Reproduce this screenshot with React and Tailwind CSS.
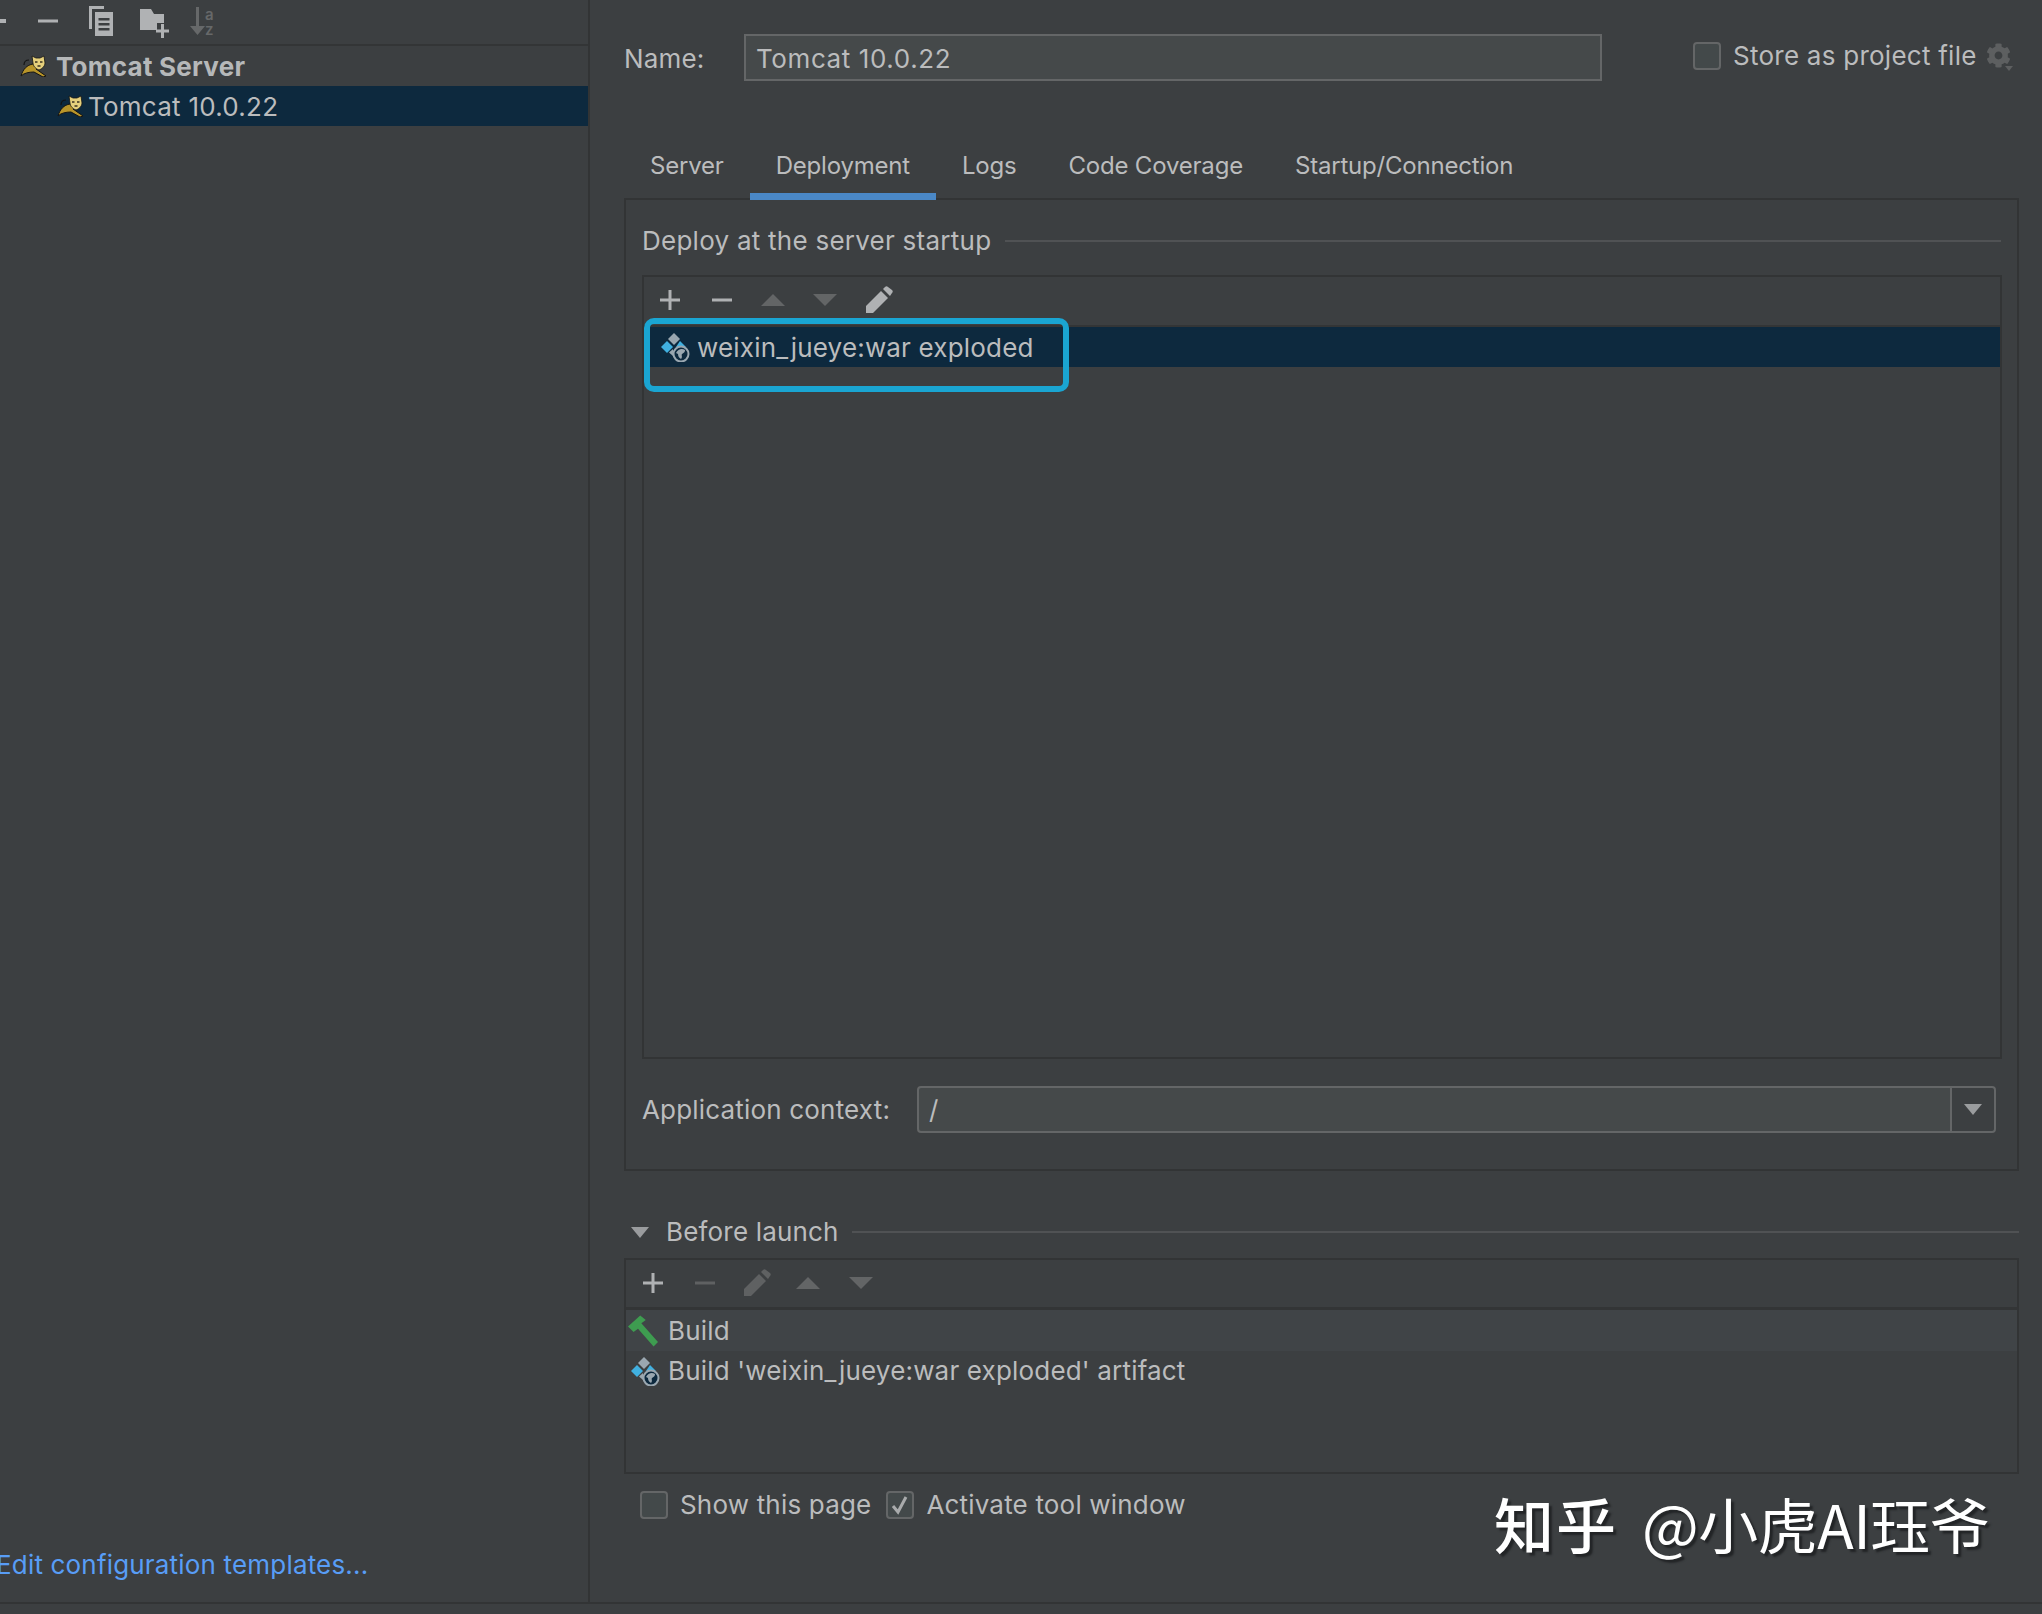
import { FaCog } from 'react-icons/fa'

const Plus = ({ color = '#afb1b3' }) => (
  <svg width="22" height="22" viewBox="0 0 22 22"><path d="M9.5 1h3v8.5H21v3h-8.5V21h-3v-8.5H1v-3h8.5z" fill={color} /></svg>
)
const Minus = ({ color = '#afb1b3' }) => (
  <svg width="22" height="22" viewBox="0 0 22 22"><rect x="1" y="9.5" width="20" height="3" fill={color} /></svg>
)
const Up = () => (
  <svg width="24" height="12" viewBox="0 0 24 12"><path d="M12 0l12 12H0z" fill="#636566" /></svg>
)
const Down = () => (
  <svg width="24" height="12" viewBox="0 0 24 12"><path d="M0 0h24L12 12z" fill="#636566" /></svg>
)
const Pencil = ({ color = '#afb1b3' }) => (
  <svg width="28" height="28" viewBox="0 0 28 28">
    <path d="M1 27v-7L16 5l7 7L8 27z" fill={color} />
    <path d="M18 3l2-2c1-1 2-1 3 0l4 3c1 1 1 2 0 3l-2 3z" fill={color} />
  </svg>
)

function Tomcat() {
  return (
    <svg width="28" height="22" viewBox="0 0 28 22" className="shrink-0">
      <path d="M1 21c2-7 6-11 12-12l8 3-5 2 10 7-3 1-9-5c-5 0-10 1-13 4z" fill="#b8952a" stroke="#141414" strokeWidth="1" />
      <path d="M4 10c0-3 2-5 5-5" fill="none" stroke="#141414" strokeWidth="1.2" />
      <path d="M12 1l4 2h4l4-2 1 7c0 3-3 6-6 7-3-1-6-4-6-7z" fill="#e6d07c" stroke="#141414" strokeWidth="0.8" />
      <path d="M15 7h2.500M20 7h2.500M17.500 11h3" stroke="#3a3020" strokeWidth="1.3" />
    </svg>
  )
}

function Artifact() {
  return (
    <svg width="30" height="30" viewBox="0 0 30 30" className="shrink-0">
      <path d="M7 9l6 6-6 6-6-6z" fill="#40b0e0" />
      <path d="M14 1l6 6-6 6-6-6z" fill="#9aa7b0" />
      <path d="M20 9l6 6h-10z" fill="#40b0e0" />
      <path d="M13 17v7l-4-3.5z" fill="#9aa7b0" />
      <circle cx="21" cy="22" r="7.5" fill="#0d293e" stroke="#9aa7b0" strokeWidth="2" />
      <path d="M16 21c2-4 6-5 9-3 0 3-2 3-3 4s1 3-1 5c-2-1-3-3-3-5z" fill="#9aa7b0" />
    </svg>
  )
}

function Hammer() {
  return (
    <svg width="30" height="32" viewBox="1 1 27 28" className="shrink-0">
      <path d="M1 11L12 1l5 4-4 3 15 17-4 4L10 13l-4 3z" fill="#3e9c50" />
    </svg>
  )
}

function Checkbox({ checked }) {
  return (
    <div className="w-[28px] h-[28px] shrink-0 rounded-[4px] border-2 border-[#646667] bg-[#43494a] flex items-center justify-center">
      {checked && (
        <svg width="18" height="20" viewBox="0 0 18 20"><path d="M2 11l5 6L15 2" fill="none" stroke="#a9abac" strokeWidth="3" /></svg>
      )}
    </div>
  )
}

export default function App() {
  const tabs = ['Server', 'Deployment', 'Logs', 'Code Coverage', 'Startup/Connection']

  return (
    <div className="relative w-[2042px] h-[1614px] overflow-hidden bg-[#3c3f41] text-[#bbbcbd] text-[26px] leading-[36px] tracking-[0.18px] font-[Inter,'Liberation_Sans',sans-serif] flex flex-col">
      <div className="flex h-[1602px]">
        {/* left tree */}
        <div className="w-[590px] shrink-0 border-r-2 border-[#323435] flex flex-col">
          <div className="h-[46px] shrink-0 border-b-2 border-[#333536] flex items-center pb-[3px]">
            <div className="w-[6px] h-[4px] bg-[#afb1b3]" />
            <div className="ml-[31px] flex"><Minus /></div>
            <svg className="ml-[29px]" width="26" height="32" viewBox="0 0 26 32" fill="#b0b2b4">
              <path d="M1 1h15v3H4v20H1z" />
              <path d="M7 7h18v24H7zM10.5 13v2.500h11V13zM10.5 18v2.500h11V18zM10.500 23v2.500h11V23z" fillRule="evenodd" />
            </svg>
            <svg className="ml-[25px] mt-[4px]" width="30" height="30" viewBox="0 0 30 30" fill="#b0b2b4">
              <path d="M1 1h11l3 5h10v9h-7v7H1z" />
              <rect x="22" y="16" width="3" height="14" />
              <rect x="17" y="21.500" width="13" height="3" />
            </svg>
            <svg className="ml-[20px] mt-[5px]" width="28" height="36" viewBox="0 0 28 36" fill="#666869">
              <path d="M7 2h3v19h6l-7.500 9L1 21h6z" />
              <text x="16" y="15" fontSize="15" fontWeight="600" fontFamily="Inter, sans-serif">a</text>
              <text x="16" y="30" fontSize="15" fontWeight="600" fontFamily="Inter, sans-serif">z</text>
            </svg>
          </div>

          <div className="h-[40px] flex items-center pl-[20px] shrink-0">
            <Tomcat />
            <span className="ml-[8px] pt-[2px] font-bold text-[#b6b8b9] tracking-[0.25px]">Tomcat Server</span>
          </div>
          <div className="h-[40px] flex items-center pl-[57px] bg-[#0d293e] shrink-0">
            <Tomcat />
            <span className="ml-[3px] pt-[2px] tracking-[0.25px]">Tomcat 10.0.22</span>
          </div>

          <a className="mt-auto mb-[19px] -ml-[4px] text-[#589df6]">Edit configuration templates...</a>
        </div>

        {/* right side */}
        <div className="w-[1395px] ml-[34px] shrink-0 flex flex-col">
          <div className="flex items-center h-[47px] mt-[34px] shrink-0">
            <span className="w-[120px] pt-[2px]">Name:</span>
            <div className="w-[858px] h-[47px] border-2 border-[#646667] bg-[#45494a] flex items-center px-[10px] pt-[2px] tracking-[0.6px]">Tomcat 10.0.22</div>
            <div className="ml-[91px] flex items-center -mt-[4px]">
              <Checkbox />
              <span className="ml-[12px] tracking-[0.25px]">Store as project file</span>
              <div className="ml-[9px] relative">
                <FaCog size={25} color="#5d5f60" />
                <div className="absolute right-[-2px] bottom-[-3px] border-x-[4px] border-t-[5px] border-x-transparent border-t-[#5d5f60]" />
              </div>
            </div>
          </div>

          <div className="flex mt-[55px] h-[64px] -mb-[2px] relative z-10 shrink-0 text-[24px] tracking-[-0.2px]">
            {tabs.map(tab => (
              <div
                key={tab}
                className={`px-[26px] pt-[12px] ${tab === 'Deployment' ? 'border-b-[7px] border-[#4a88c7]' : ''}`}
              >
                {tab}
              </div>
            ))}
          </div>

          {/* deployment panel */}
          <div className="h-[973px] shrink-0 border-2 border-[#323435] px-[16px] pt-[23px]">
            <div className="flex items-center h-[36px]">
              <span className="tracking-[0.25px]">Deploy at the server startup</span>
              <div className="flex-1 h-[2px] bg-[#505254] ml-[14px]" />
            </div>
            <div className="relative mt-[16px] h-[784px] w-[1360px] border-2 border-[#323435]">
              <div className="h-[50px] border-b-2 border-[#333536] flex items-center pb-[3px]">
                <div className="ml-[15px]"><Plus /></div>
                <div className="ml-[30px]"><Minus /></div>
                <div className="ml-[28px]"><Up /></div>
                <div className="ml-[28px]"><Down /></div>
                <div className="ml-[28px]"><Pencil /></div>
              </div>
              <div className="h-[40px] bg-[#0d293e] flex items-center pl-[16px]">
                <Artifact />
                <span className="ml-[7px] pt-[2px]">weixin_jueye:war exploded</span>
              </div>
              <div className="absolute left-0 top-[41px] w-[425px] h-[74px] rounded-[10px] border-[6px] border-[#1aa5d2]" />
            </div>
            <div className="flex items-center mt-[27px]">
              <span className="w-[275px]">Application context:</span>
              <div className="w-[1079px] h-[47px] rounded-[4px] border-2 border-[#646667] bg-[#45494a] flex items-center">
                <span className="flex-1 pl-[10px]">/</span>
                <div className="w-[44px] h-full border-l-2 border-[#646667] bg-[#3c3f41] rounded-r-[3px] flex items-center justify-center">
                  <div className="border-x-[9px] border-t-[11px] border-x-transparent border-t-[#9a9c9e]" />
                </div>
              </div>
            </div>
          </div>

          {/* before launch */}
          <div className="flex items-center h-[36px] mt-[43px] shrink-0">
            <div className="ml-[7px] border-x-[9px] border-t-[11px] border-x-transparent border-t-[#9a9c9e]" />
            <span className="ml-[17px]">Before launch</span>
            <div className="flex-1 h-[2px] bg-[#505254] ml-[13px]" />
          </div>
          <div className="mt-[8px] h-[216px] shrink-0 border-2 border-[#323435]">
            <div className="h-[50px] border-b-[3px] border-[#333536] flex items-center pb-[2px]">
              <div className="ml-[16px]"><Plus /></div>
              <div className="ml-[30px]"><Minus color="#5f6162" /></div>
              <div className="ml-[27px]"><Pencil color="#5f6162" /></div>
              <div className="ml-[25px]"><Up /></div>
              <div className="ml-[29px]"><Down /></div>
            </div>
            <div className="h-[41px] bg-[#404447] flex items-center pl-[2px]">
              <Hammer />
              <span className="ml-[10px]">Build</span>
            </div>
            <div className="h-[39px] flex items-center pl-[4px]">
              <Artifact />
              <span className="ml-[8px]">Build 'weixin_jueye:war exploded' artifact</span>
            </div>
          </div>
          <div className="flex items-center mt-[13px] pl-[16px]">
            <Checkbox />
            <span className="ml-[12px]">Show this page</span>
            <div className="ml-[15px]"><Checkbox checked /></div>
            <span className="ml-[12px]">Activate tool window</span>
          </div>
        </div>
      </div>

      <div className="flex-1 border-t-2 border-[#323435]" />

      <div className="absolute left-[1494px] top-[1483px] text-white text-[60px] leading-[80px] tracking-[-0.5px] [word-spacing:11px] whitespace-nowrap font-['Noto_Sans_CJK_SC','Noto_Sans',sans-serif] [text-shadow:3px_3px_2px_#222426]">
        <span className="font-medium tracking-[2px]">知乎</span> @小虎AI珏爷
      </div>
    </div>
  )
}
